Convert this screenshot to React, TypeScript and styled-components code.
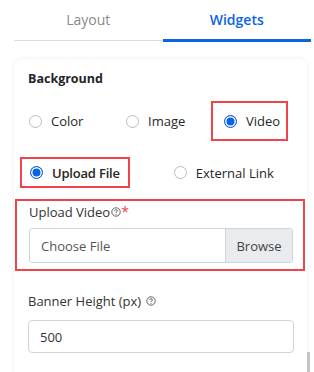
import styled, { createGlobalStyle } from "styled-components";
import React from "react";

const GlobalStyle = createGlobalStyle`
  body {
    margin: 0;
    background: #ffffff;
    font-family: "Open Sans", "Noto Sans", sans-serif;
    color: #212529;
  }
`;

const BLUE = "#0b63e5";
const RED = "#f0434a";

const HelpIcon = () => (
  <svg width="10" height="10" viewBox="0 0 10 10">
    <circle cx="5" cy="5" r="4.2" fill="none" stroke="#555" strokeWidth="0.9" />
    <path
      d="M3.6 4 C3.6 3.1 4.3 2.8 5 2.8 C5.8 2.8 6.4 3.3 6.4 4 C6.4 4.8 5 4.9 5 5.9"
      fill="none"
      stroke="#555"
      strokeWidth="0.9"
    />
    <circle cx="5" cy="7.2" r="0.55" fill="#555" />
  </svg>
);

const Radio = ({ label, checked, bold }: { label: string; checked?: boolean; bold?: boolean }) => (
  <RadioItem>
    <RadioCircle $checked={checked} />
    <RadioLabel $bold={bold}>{label}</RadioLabel>
  </RadioItem>
);

const App = () => {
  return (
    <>
      <GlobalStyle />
      <Page>
        <Tabs>
          <Tab>Layout</Tab>
          <Tab $active>Widgets</Tab>
        </Tabs>
        <Card>
          <SectionTitle>Background</SectionTitle>
          <TypeRow>
            <Radio label="Color" />
            <Radio label="Image" />
            <Highlight $pad="0 6px 0 11px" $height={40}>
              <Radio label="Video" checked />
            </Highlight>
          </TypeRow>
          <SourceRow>
            <Highlight $pad="0 8px 0 8px" $height={31}>
              <Radio label="Upload File" checked bold />
            </Highlight>
            <Radio label="External Link" />
          </SourceRow>
          <UploadBox>
            <FieldLabel $gap={7}>
              Upload Video
              <HelpIcon />
              <Required>*</Required>
            </FieldLabel>
            <FileInput>
              <FileText>Choose File</FileText>
              <BrowseButton>Browse</BrowseButton>
            </FileInput>
          </UploadBox>
          <Field>
            <FieldLabel $gap={10}>
              Banner Height (px)&nbsp;
              <HelpIcon />
            </FieldLabel>
            <TextInput>500</TextInput>
          </Field>
        </Card>
        <ScrollThumb />
      </Page>
    </>
  );
};

const Page = styled.div`
  position: relative;
  width: 314px;
  height: 372px;
  overflow: hidden;
  padding: 0 3px 0 14px;
  box-sizing: border-box;
`;

const Tabs = styled.div`
  display: flex;
  height: 42px;
`;

const Tab = styled.div<{ $active?: boolean }>`
  flex: 1;
  display: flex;
  align-items: center;
  justify-content: center;
  padding-bottom: 1px;
  box-sizing: border-box;
  font-size: 14px;
  font-weight: ${(p) => (p.$active ? 600 : 400)};
  color: ${(p) => (p.$active ? BLUE : "#8a8a8a")};
  border-bottom: ${(p) => (p.$active ? `3px solid ${BLUE}` : "1px solid #dcdcdc")};
  height: ${(p) => (p.$active ? "42px" : "41px")};
`;

const Card = styled.div`
  margin-top: 17px;
  width: 293px;
  border-radius: 8px;
  background: #fff;
  box-shadow: 0 0 4px rgba(0, 0, 0, 0.08);
  padding: 11px 0 0 0;
  height: 400px;
  box-sizing: border-box;
`;

const SectionTitle = styled.div`
  font-size: 12.5px;
  font-weight: 700;
  padding-left: 14px;
  line-height: 18px;
`;

const TypeRow = styled.div`
  display: flex;
  align-items: center;
  margin-top: 13px;
  padding-left: 15px;
  & > :nth-child(1) {
    width: 97px;
  }
  & > :nth-child(2) {
    width: 85px;
  }
`;

const SourceRow = styled.div`
  display: flex;
  align-items: center;
  margin-top: 16px;
  padding-left: 6px;
  gap: 44px;
`;

const Highlight = styled.div<{ $pad: string; $height: number }>`
  display: flex;
  align-items: center;
  height: ${(p) => p.$height}px;
  padding: ${(p) => p.$pad};
  border: 2px solid ${RED};
  box-sizing: border-box;
`;

const RadioItem = styled.div`
  display: flex;
  align-items: center;
  gap: 9px;
`;

const RadioCircle = styled.span<{ $checked?: boolean }>`
  width: 13px;
  height: 13px;
  border-radius: 50%;
  box-sizing: border-box;
  border: 1px solid ${(p) => (p.$checked ? BLUE : "#b8bcc0")};
  background: ${(p) => (p.$checked ? BLUE : "#fff")};
  box-shadow: ${(p) => (p.$checked ? "inset 0 0 0 1.5px #fff" : "none")};
  flex-shrink: 0;
`;

const RadioLabel = styled.span<{ $bold?: boolean }>`
  font-size: 13px;
  font-weight: ${(p) => (p.$bold ? 600 : 400)};
  letter-spacing: ${(p) => (p.$bold ? "-0.2px" : "0")};
  color: #262626;
  line-height: 18px;
`;

const UploadBox = styled.div`
  margin: 11px 2px 0 1px;
  border: 2px solid ${RED};
  padding: 2px 10px 6px 12px;
`;

const Field = styled.div`
  margin-top: 21px;
  padding: 0 13px 0 14px;
`;

const FieldLabel = styled.div<{ $gap: number }>`
  display: flex;
  align-items: center;
  font-size: 13px;
  color: #333;
  line-height: 18px;
  margin-bottom: ${(p) => p.$gap}px;
  & > svg {
    margin-left: 1px;
  }
`;

const Required = styled.span`
  color: ${RED};
  font-size: 14px;
`;

const FileInput = styled.div`
  display: flex;
  height: 35px;
  border: 1px solid #cfd4da;
  border-radius: 3px;
  overflow: hidden;
  box-sizing: border-box;
  font-size: 13px;
`;

const FileText = styled.div`
  flex: 1;
  display: flex;
  align-items: center;
  padding-left: 11px;
  color: #555;
`;

const BrowseButton = styled.div`
  width: 66px;
  display: flex;
  align-items: center;
  justify-content: center;
  background: #e9ecef;
  border-left: 1px solid #cfd4da;
  color: #444;
`;

const TextInput = styled.div`
  height: 33px;
  border: 1px solid #cfd4da;
  border-radius: 4px;
  display: flex;
  align-items: center;
  padding-left: 11px;
  font-size: 13px;
  color: #333;
  box-sizing: border-box;
`;

const ScrollThumb = styled.div`
  position: absolute;
  right: 4px;
  top: 352px;
  width: 3px;
  height: 20px;
  background: #c4c4c4;
`;

export default App;
